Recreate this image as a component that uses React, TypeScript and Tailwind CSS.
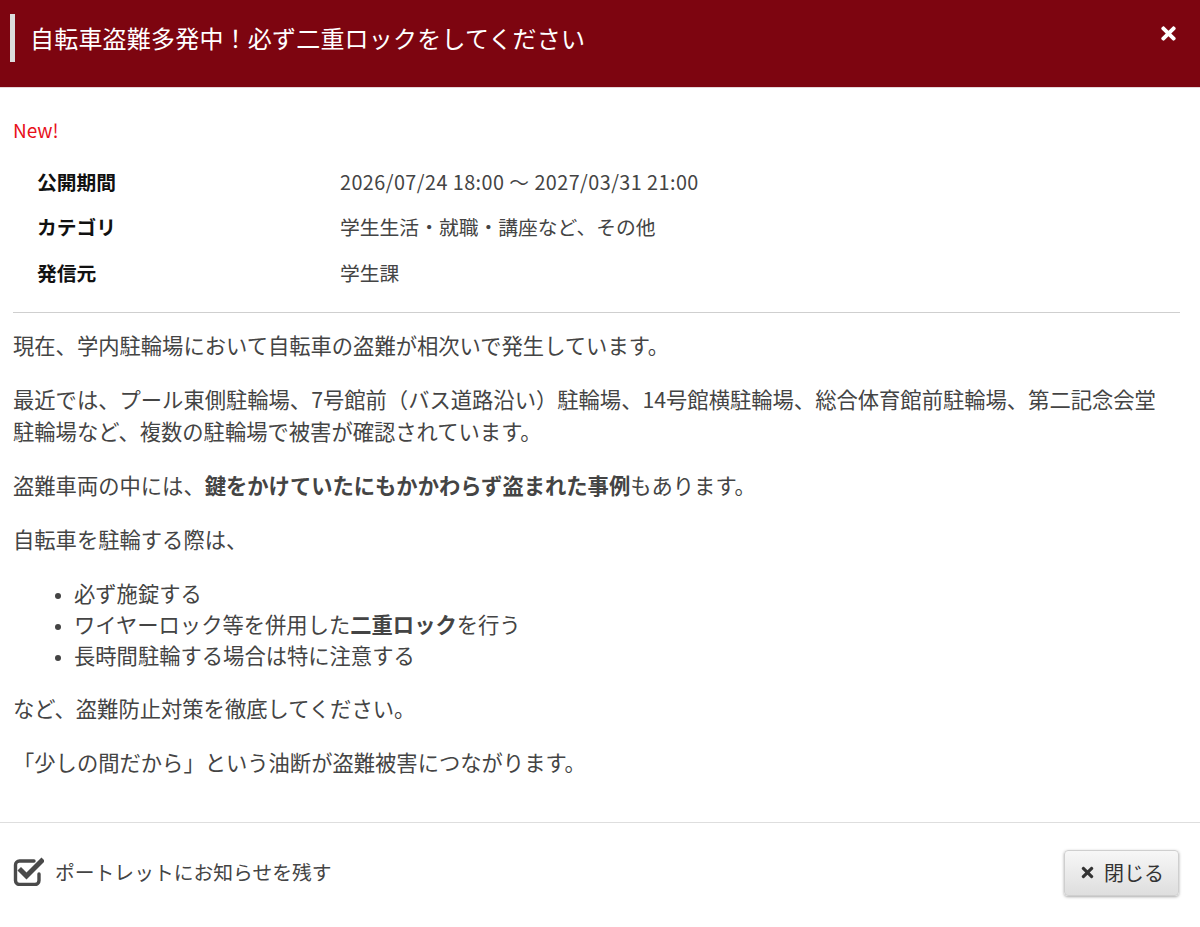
import React from 'react';
import { FaTimes } from 'react-icons/fa';

const font = { fontFamily: '"Noto Sans CJK JP", "Noto Sans", sans-serif' };

// FontAwesome-4 style "check-square-o": open square with a check poking out
function CheckSquareIcon() {
  return (
    <svg width="31" height="29" viewBox="0 0 31 29" fill="none">
      <path
        d="M21 4H6.5A4 4 0 0 0 2.5 8v15.5a4 4 0 0 0 4 4H22a4 4 0 0 0 4-4V17"
        stroke="#4a4a4a"
        strokeWidth="3.4"
        strokeLinecap="round"
      />
      <path
        d="M8 13.5l5.5 5.5L28.5 4"
        stroke="#4a4a4a"
        strokeWidth="5"
        strokeLinecap="square"
        strokeLinejoin="miter"
      />
    </svg>
  );
}

const meta = [
  { label: '公開期間', value: '2026/07/24 18:00 〜 2027/03/31 21:00', wide: true },
  { label: 'カテゴリ', value: '学生生活・就職・講座など、その他', wide: false },
  { label: '発信元', value: '学生課', wide: false },
];

export default function App() {
  const [keep, setKeep] = React.useState(true);

  return (
    <div className="w-[1200px] h-[927px] bg-white flex flex-col text-[#444]" style={font}>
      <header className="h-[88px] shrink-0 bg-[#7d0510] border-b border-[#e8d6d8] pl-[10px] pr-[21px] pt-[14px]">
        <div className="h-[48px] flex items-center">
          <div className="w-[5px] h-[48px] bg-[#dcdcdc]" />
          <h1 className="ml-[15px] text-[24px] leading-none text-white tracking-[0.2px]">
            自転車盗難多発中！必ず二重ロックをしてください
          </h1>
          <button className="ml-auto -mt-[9px] text-white">
            <FaTimes className="w-[21px] h-[21px]" />
          </button>
        </div>
      </header>

      <main className="shrink-0 pl-[13px] pr-[20px] pt-[30px] pb-[44px] border-b border-[#dedede]">
        <div className="text-[19px] leading-[24px] text-[#e8101a]">New!</div>

        <div className="mt-[17px] grid grid-cols-[327px_1fr] text-[19.8px]">
          {meta.map(row => (
            <React.Fragment key={row.label}>
              <div className="h-[45.5px] flex items-center pl-[24px] font-bold text-[#111]">{row.label}</div>
              <div className={`h-[45.5px] flex items-center text-[#444] ${row.wide ? 'tracking-[0.45px]' : ''}`}>
                {row.value}
              </div>
            </React.Fragment>
          ))}
        </div>

        <hr className="mt-[16px] border-t border-[#cfcfcf]" />

        <div className="mt-[16px] text-[21.3px] leading-[32px] space-y-[22px]">
          <p>現在、学内駐輪場において自転車の盗難が相次いで発生しています。</p>
          <p>
            最近では、プール東側駐輪場、7号館前（バス道路沿い）駐輪場、14号館横駐輪場、総合体育館前駐輪場、第二記念会堂
            <br />
            駐輪場など、複数の駐輪場で被害が確認されています。
          </p>
          <p>
            盗難車両の中には、<strong className="font-bold">鍵をかけていたにもかかわらず盗まれた事例</strong>もあります。
          </p>
          <p>自転車を駐輪する際は、</p>
          <ul className="list-disc pl-[61px] leading-[31px] marker:text-[16px]">
            <li>必ず施錠する</li>
            <li>
              ワイヤーロック等を併用した<strong className="font-bold">二重ロック</strong>を行う
            </li>
            <li>長時間駐輪する場合は特に注意する</li>
          </ul>
          <p>など、盗難防止対策を徹底してください。</p>
          <p>「少しの間だから」という油断が盗難被害につながります。</p>
        </div>
      </main>

      <footer className="flex-1 flex items-start justify-between pl-[13px] pr-[21px] pt-[27px]">
        <label className="flex items-center gap-[11px] mt-[7px] cursor-pointer select-none">
          <input
            type="checkbox"
            className="sr-only"
            checked={keep}
            onChange={e => setKeep(e.target.checked)}
          />
          <CheckSquareIcon />
          <span className="text-[19.8px] text-[#444]">ポートレットにお知らせを残す</span>
        </label>

        <button className="w-[115px] h-[46px] flex items-center justify-center gap-[8px] rounded-[4px] border border-[#cfcfcf] bg-gradient-to-b from-[#f7f7f7] to-[#dedede] shadow-[0_1px_3px_rgba(0,0,0,0.35)] text-[20px] text-[#333]">
          <FaTimes className="w-[17px] h-[17px]" />
          閉じる
        </button>
      </footer>
    </div>
  );
}
